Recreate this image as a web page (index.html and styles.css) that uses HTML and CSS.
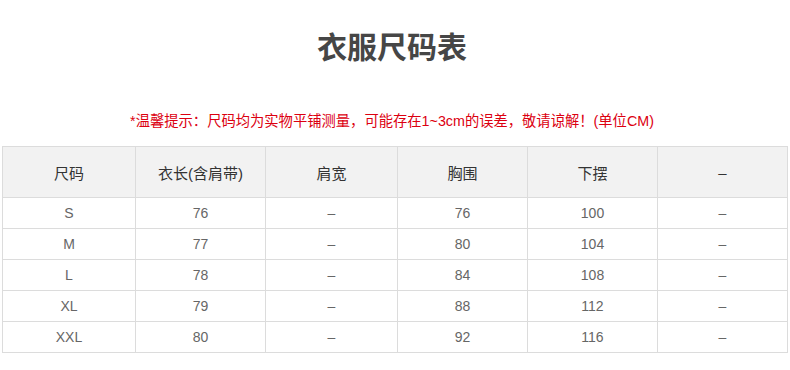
FILE: index.html
```html
<!DOCTYPE html>
<html lang="zh-CN">
<head>
<meta charset="utf-8">
<link rel="stylesheet" href="styles.css">
</head>
<body>
<div class="page">
  <h1 class="title">衣服尺码表</h1>
  <p class="note">*温馨提示：尺码均为实物平铺测量，可能存在1~3cm的误差，敬请谅解！(单位CM)</p>
  <table class="size-table">
    <colgroup>
      <col class="c1"><col class="c2"><col class="c3"><col class="c4"><col class="c5"><col class="c6">
    </colgroup>
    <thead>
      <tr><th>尺码</th><th>衣长(含肩带)</th><th>肩宽</th><th>胸围</th><th>下摆</th><th>–</th></tr>
    </thead>
    <tbody>
      <tr><td>S</td><td>76</td><td>–</td><td>76</td><td>100</td><td>–</td></tr>
      <tr><td>M</td><td>77</td><td>–</td><td>80</td><td>104</td><td>–</td></tr>
      <tr><td>L</td><td>78</td><td>–</td><td>84</td><td>108</td><td>–</td></tr>
      <tr><td>XL</td><td>79</td><td>–</td><td>88</td><td>112</td><td>–</td></tr>
      <tr><td>XXL</td><td>80</td><td>–</td><td>92</td><td>116</td><td>–</td></tr>
    </tbody>
  </table>
</div>
</body>
</html>
```

FILE: styles.css
```css
html, body {
  margin: 0;
  padding: 0;
  background: #fff;
}
body {
  font-family: "Liberation Sans", "Noto Sans CJK SC", sans-serif;
  color: #555;
}
.page {
  width: 790px;
  padding-top: 25px;
}
.title {
  margin: 0;
  width: 784px;
  text-align: center;
  font-family: "Noto Sans CJK SC", sans-serif;
  font-size: 30px;
  font-weight: 700;
  line-height: 40px;
  color: #464646;
}
.note {
  margin: 46px 0 0;
  width: 784px;
  text-align: center;
  font-size: 14.3px;
  line-height: 20px;
  color: #dc0010;
}
.size-table {
  margin: 15px 0 0 2px;
  width: 785px;
  border-collapse: collapse;
  table-layout: fixed;
}
.c1 { width: 133px; }
.c2 { width: 130px; }
.c3 { width: 132px; }
.c4 { width: 130px; }
.c5 { width: 130px; }
.c6 { width: 130px; }
.size-table th,
.size-table td {
  border: 1px solid #dcdcdc;
  text-align: center;
  padding: 0;
}
.size-table th {
  height: 50px;
  background: #f2f2f2;
  font-weight: 400;
  font-size: 15px;
  color: #333;
}
.size-table td {
  height: 30px;
  font-size: 14px;
  color: #666;
}
```
